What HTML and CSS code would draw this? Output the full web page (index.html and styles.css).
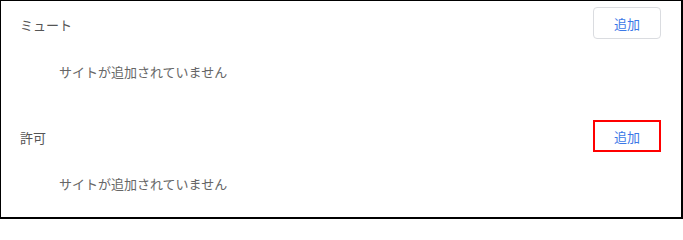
FILE: index.html
```html
<!DOCTYPE html>
<html lang="ja">
<head>
<meta charset="utf-8">
<link rel="stylesheet" href="styles.css">
</head>
<body>
<div class="frame">
  <section class="section">
    <div class="header">
      <span class="label">ミュート</span>
      <button class="add">追加</button>
    </div>
    <div class="empty">サイトが追加されていません</div>
  </section>
  <section class="section">
    <div class="header second">
      <span class="label">許可</span>
      <button class="add focused">追加</button>
    </div>
    <div class="empty">サイトが追加されていません</div>
  </section>
</div>
</body>
</html>
```
FILE: styles.css
```css
html, body {
  margin: 0;
  padding: 0;
  background: #ffffff;
}
body {
  font-family: "Noto Sans CJK JP", "Noto Sans", sans-serif;
  font-size: 13px;
}
.frame {
  box-sizing: border-box;
  width: 683px;
  height: 219px;
  border-style: solid;
  border-color: #000;
  border-width: 1px 2px 2px 1px;
  background: #fff;
}
.header {
  display: flex;
  align-items: center;
  justify-content: space-between;
  padding: 6px 20px 0 19px;
}
.header.second {
  padding-top: 0;
}
.label {
  color: #555;
  line-height: 20px;
  margin-top: 4px;
}
.add {
  box-sizing: border-box;
  width: 68px;
  height: 32px;
  border: 1px solid #dadce0;
  border-radius: 4px;
  background: #fff;
  color: #3b78e7;
  font-family: inherit;
  font-size: 13px;
  padding: 0;
  margin: 0;
}
.add.focused {
  border: 2px solid #ff0000;
  border-radius: 0;
}
.empty {
  color: #666;
  line-height: 20px;
  padding: 23px 0 0 58px;
  height: 58px;
  box-sizing: border-box;
}
.section + .section .empty {
  padding-top: 22px;
}
.section:first-child .empty {
  height: 81px;
}
```
